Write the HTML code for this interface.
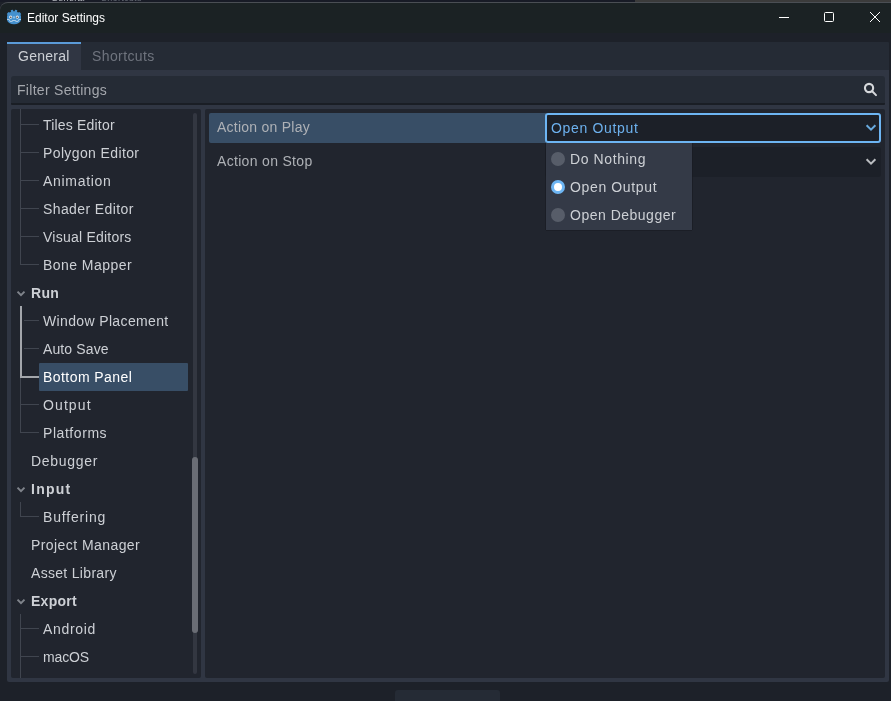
<!DOCTYPE html>
<html>
<head>
<meta charset="utf-8">
<title>Editor Settings</title>
<style>
html,body{margin:0;padding:0;}
body{will-change:transform;width:891px;height:701px;overflow:hidden;background:#1d2129;position:relative;font-family:"Liberation Sans",sans-serif;font-size:14px;color:#cdd0d5;letter-spacing:0.4px;}
div,span{position:absolute;box-sizing:border-box;white-space:nowrap;}
.behind1{left:0;top:0;width:635px;height:2px;background:#181b26;}
.behind2{left:635px;top:0;width:256px;height:2px;background:#3b3b3b;}
.behindtxt{left:0;top:0;width:300px;height:2px;overflow:hidden;}
.behindtxt span{top:-7px;line-height:10px;font-size:9px;letter-spacing:0.3px;}
.titlebar{left:0;top:2px;width:900px;height:31px;background:#1b2224;border-top:1px solid #4a4e54;border-top-left-radius:8px;}
.title{left:27px;top:11px;font-size:12px;letter-spacing:0;color:#fff;line-height:15px;}
.tabbar{left:7px;top:42px;width:882px;height:28px;background:#252b35;border-radius:1px 1px 0 0;}
.tabsel{left:7px;top:42px;width:74px;height:28px;background:#303643;border-top:2px solid #5b9bd8;}
.tabtxt{top:46px;line-height:20px;}
.panel{left:7px;top:70px;width:882px;height:612px;background:#303643;border-radius:0 0 2px 2px;}
.filter{left:11px;top:76px;width:874px;height:29px;background:#252b35;border-bottom:2px solid #1a1e25;border-radius:3px 3px 1px 1px;}
.filter span{left:6px;top:4px;line-height:20px;color:#a4a7ad;letter-spacing:0.3px;}
.tree{left:11px;top:109px;width:190px;height:569px;background:#21252e;border-radius:2px;overflow:hidden;}
.content{left:205px;top:109px;width:680px;height:569px;background:#21252e;border-radius:2px;}
.row{left:0;height:28px;line-height:28px;}
.t1{left:20px;}
.t2{left:32px;}
.b{font-weight:bold;letter-spacing:0.3px;}
.vl{width:1px;background:#40454f;}
.hl{height:1px;background:#40454f;}
.bottombtn{left:395px;top:690px;width:105px;height:20px;background:#252b35;border-radius:3px;}
</style>
</head>
<body>
<div class="behind1"></div><div class="behind2"></div>
<div class="behindtxt"><span style="left:51px;color:#b9bcc2;">General</span><span style="left:101px;color:#676c76;">Shortcuts</span></div>
<div class="titlebar"></div>
<svg style="position:absolute;left:6px;top:9px" width="16" height="16" viewBox="0 0 16 16">
<path d="M8 2.3 L7.25 2.2 L7.1 0.9 Q5.8 0.6 4.7 1.3 L5.0 2.7 Q4.3 3.0 3.8 3.6 L2.7 2.9 Q1.3 3.6 0.8 5.2 L1.7 6.0 L1.0 6.7 L1.0 10.8 Q1.2 12.9 3.2 14.0 Q5.4 15.2 8 15.2 Q10.6 15.2 12.8 14.0 Q14.8 12.9 15.0 10.8 L15.0 6.7 L14.3 6.0 L15.2 5.2 Q14.7 3.6 13.3 2.9 L12.2 3.6 Q11.7 3.0 11.0 2.7 L11.3 1.3 Q10.2 0.6 8.9 0.9 L8.75 2.2 Z" fill="#4591ce"/>
<circle cx="4.7" cy="8.1" r="1.55" fill="#eef3f8"/><circle cx="11.3" cy="8.1" r="1.55" fill="#eef3f8"/>
<circle cx="4.8" cy="8.2" r="0.8" fill="#4d3f3c"/><circle cx="11.2" cy="8.2" r="0.8" fill="#4d3f3c"/>
<rect x="7.3" y="7.2" width="1.4" height="2.2" rx="0.6" fill="#a9d2f2"/>
<path d="M1.0 10.5 H3.3 L3.9 12.4 H6.3 V11.5 H9.7 V12.4 H12.1 L12.7 10.5 H15" fill="none" stroke="#c9def1" stroke-width="0.8"/>
</svg>
<div class="title">Editor Settings</div>
<svg style="position:absolute;left:776px;top:9px" width="110" height="18" viewBox="0 0 110 18">
<path d="M3 8.5 H13" stroke="#fff" stroke-width="1" fill="none"/>
<rect x="48.5" y="3.5" width="9" height="9" rx="1" fill="none" stroke="#fff" stroke-width="1"/>
<path d="M94 3 L104 13 M104 3 L94 13" stroke="#fff" stroke-width="1" fill="none"/>
</svg>

<div class="tabbar"></div>
<div class="tabsel"></div>
<div class="tabtxt" style="left:18px;color:#cdd0d5;letter-spacing:0.25px;">General</div>
<div class="tabtxt" style="left:92px;color:#6f747e;">Shortcuts</div>
<div class="panel"></div>
<div class="filter"><span>Filter Settings</span>
<svg style="position:absolute;left:852px;top:6px" width="16" height="16" viewBox="0 0 16 16"><circle cx="6.05" cy="6" r="4.1" fill="none" stroke="#d6d8db" stroke-width="2.1"/><path d="M9.2 9.2 L13 13.1" stroke="#d6d8db" stroke-width="2" stroke-linecap="round"/></svg>
</div>

<div class="tree">
  <!-- relationship lines -->
  <div class="vl" style="left:9px;top:0;height:155px;"></div>
  <div class="hl" style="left:9px;top:15px;width:19px;"></div>
  <div class="hl" style="left:9px;top:43px;width:19px;"></div>
  <div class="hl" style="left:9px;top:71px;width:19px;"></div>
  <div class="hl" style="left:9px;top:99px;width:19px;"></div>
  <div class="hl" style="left:9px;top:127px;width:19px;"></div>
  <div class="hl" style="left:9px;top:155px;width:19px;"></div>

  <div class="hl" style="left:13px;top:211px;width:15px;"></div>
  <div class="hl" style="left:13px;top:239px;width:15px;"></div>
  <div class="vl" style="left:9px;top:197px;height:72px;width:2px;background:#a3a6ab;"></div>
  <div class="hl" style="left:9px;top:267px;width:20px;height:2px;background:#a3a6ab;"></div>
  <div class="vl" style="left:9px;top:269px;height:55px;"></div>
  <div class="hl" style="left:9px;top:295px;width:19px;"></div>
  <div class="hl" style="left:9px;top:323px;width:19px;"></div>

  <div class="vl" style="left:9px;top:393px;height:15px;"></div>
  <div class="hl" style="left:9px;top:407px;width:19px;"></div>

  <div class="vl" style="left:9px;top:505px;height:70px;"></div>
  <div class="hl" style="left:9px;top:519px;width:19px;"></div>
  <div class="hl" style="left:9px;top:547px;width:19px;"></div>

  <div style="left:28px;top:254px;width:149px;height:28px;background:#384e66;border-radius:1px;"></div>

  <div class="row t2" style="top:2px;letter-spacing:0.19px;">Tiles Editor</div>
  <div class="row t2" style="top:30px;letter-spacing:0.38px;">Polygon Editor</div>
  <div class="row t2" style="top:58px;letter-spacing:0.69px;">Animation</div>
  <div class="row t2" style="top:86px;letter-spacing:0.4px;">Shader Editor</div>
  <div class="row t2" style="top:114px;letter-spacing:0.23px;">Visual Editors</div>
  <div class="row t2" style="top:142px;letter-spacing:0.45px;">Bone Mapper</div>
  <div class="row t1 b" style="top:170px;letter-spacing:0.3px;">Run</div>
  <div class="row t2" style="top:198px;letter-spacing:0.36px;">Window Placement</div>
  <div class="row t2" style="top:226px;letter-spacing:0.12px;">Auto Save</div>
  <div class="row t2" style="top:254px;color:#fff;letter-spacing:0.44px;">Bottom Panel</div>
  <div class="row t2" style="top:282px;letter-spacing:1.1px;">Output</div>
  <div class="row t2" style="top:310px;letter-spacing:0.56px;">Platforms</div>
  <div class="row t1" style="top:338px;letter-spacing:0.69px;">Debugger</div>
  <div class="row t1 b" style="top:366px;letter-spacing:1.25px;">Input</div>
  <div class="row t2" style="top:394px;letter-spacing:0.81px;">Buffering</div>
  <div class="row t1" style="top:422px;letter-spacing:0.43px;">Project Manager</div>
  <div class="row t1" style="top:450px;letter-spacing:0.31px;">Asset Library</div>
  <div class="row t1 b" style="top:478px;letter-spacing:0.26px;">Export</div>
  <div class="row t2" style="top:506px;letter-spacing:0.67px;">Android</div>
  <div class="row t2" style="top:534px;letter-spacing:-0.13px;">macOS</div>

  <svg style="position:absolute;left:5px;top:181px" width="10" height="7" viewBox="0 0 10 7"><path d="M1.5 1.6 L5 5.1 L8.5 1.6" fill="none" stroke="#7f838b" stroke-width="2"/></svg>
  <svg style="position:absolute;left:5px;top:377px" width="10" height="7" viewBox="0 0 10 7"><path d="M1.5 1.6 L5 5.1 L8.5 1.6" fill="none" stroke="#7f838b" stroke-width="2"/></svg>
  <svg style="position:absolute;left:5px;top:489px" width="10" height="7" viewBox="0 0 10 7"><path d="M1.5 1.6 L5 5.1 L8.5 1.6" fill="none" stroke="#7f838b" stroke-width="2"/></svg>

  <div style="left:182px;top:4px;width:4px;height:561px;background:#333741;border-radius:2px;"></div>
  <div style="left:181px;top:348px;width:6px;height:176px;background:#6a6d75;border-radius:3px;"></div>
</div>

<div class="content">
  <div style="left:4px;top:4px;width:337px;height:30px;background:#384e66;border-radius:2px 0 0 2px;"></div>
  <div style="left:12px;top:3px;line-height:30px;color:#aeb1b6;letter-spacing:0.25px;">Action on Play</div>
  <div style="left:12px;top:37px;line-height:30px;color:#aeb1b6;letter-spacing:0.32px;">Action on Stop</div>
  <div style="left:340px;top:4px;width:336px;height:30px;background:#1c2028;border:2px solid #6db5f3;border-radius:3px;"></div>
  <div style="left:346px;top:4px;line-height:30px;color:#6db1ee;letter-spacing:0.67px;">Open Output</div>
  <svg style="position:absolute;left:660px;top:14px" width="12" height="9" viewBox="0 0 12 9"><path d="M1.6 2.3 L6 6.7 L10.4 2.3" fill="none" stroke="#69aade" stroke-width="2"/></svg>
  <div style="left:340px;top:38px;width:336px;height:30px;background:#1c2028;border-radius:3px;"></div>
  <svg style="position:absolute;left:660px;top:48px" width="12" height="9" viewBox="0 0 12 9"><path d="M1.6 2.3 L6 6.7 L10.4 2.3" fill="none" stroke="#bbbdc1" stroke-width="2"/></svg>
</div>

<div style="left:546px;top:143px;width:146px;height:87px;background:#343a47;box-shadow:-1px 0 0 rgba(24,27,33,0.6),1px 0 0 rgba(24,27,33,0.6),0 1px 0 rgba(24,27,33,0.6);">
  <div style="left:5px;top:9px;width:14px;height:14px;border-radius:7px;background:#575d69;"></div>
  <div style="left:5px;top:37px;width:14px;height:14px;border-radius:7px;background:#fff;border:3px solid #6db5f3;"></div>
  <div style="left:5px;top:65px;width:14px;height:14px;border-radius:7px;background:#575d69;"></div>
  <div style="left:24px;top:2px;line-height:28px;letter-spacing:0.6px;">Do Nothing</div>
  <div style="left:24px;top:30px;line-height:28px;letter-spacing:0.64px;">Open Output</div>
  <div style="left:24px;top:58px;line-height:28px;letter-spacing:0.5px;">Open Debugger</div>
</div>

<div class="bottombtn"></div>
</body>
</html>
